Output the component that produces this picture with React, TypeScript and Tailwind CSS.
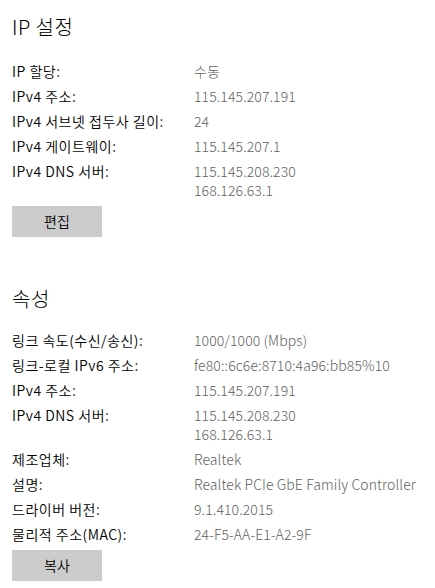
import React from "react";

type Row = { label: string; values: string[] };

const ipRows: Row[] = [
  { label: "IP 할당:", values: ["수동"] },
  { label: "IPv4 주소:", values: ["115.145.207.191"] },
  { label: "IPv4 서브넷 접두사 길이:", values: ["24"] },
  { label: "IPv4 게이트웨이:", values: ["115.145.207.1"] },
  { label: "IPv4 DNS 서버:", values: ["115.145.208.230", "168.126.63.1"] },
];

const propRows: Row[] = [
  { label: "링크 속도(수신/송신):", values: ["1000/1000 (Mbps)"] },
  { label: "링크-로컬 IPv6 주소:", values: ["fe80::6c6e:8710:4a96:bb85%10"] },
  { label: "IPv4 주소:", values: ["115.145.207.191"] },
  { label: "IPv4 DNS 서버:", values: ["115.145.208.230", "168.126.63.1"] },
  { label: "제조업체:", values: ["Realtek"] },
  { label: "설명:", values: ["Realtek PCIe GbE Family Controller"] },
  { label: "드라이버 버전:", values: ["9.1.410.2015"] },
  { label: "물리적 주소(MAC):", values: ["24-F5-AA-E1-A2-9F"] },
];

function Rows({ rows }: { rows: Row[] }) {
  return (
    <div className="flex flex-col">
      {rows.map((r, i) => (
        <div key={i} className="flex py-[3px] text-[14px] leading-[19px]">
          <div className="w-[182px] text-black font-[350] tracking-[0.5px]">{r.label}</div>
          <div className="flex flex-col text-[#5f5f5f] font-light tracking-[0.1px]">
            {r.values.map((v, j) => (
              <div key={j}>{v}</div>
            ))}
          </div>
        </div>
      ))}
    </div>
  );
}

export default function App() {
  return (
    <div
      className="w-[435px] h-[588px] bg-white px-3 overflow-hidden"
      style={{ fontFamily: '"Noto Sans CJK KR", "Noto Sans", sans-serif' }}
    >
      <div className="pt-[13px] text-[20px] leading-[28px] text-black font-light tracking-[0.5px]">IP 설정</div>
      <div className="mt-[18px]">
        <Rows rows={ipRows} />
      </div>
      <button className="mt-[3px] w-[90px] h-[31px] bg-[#cccccc] text-[14px] font-[350] text-black flex items-center justify-center">
        편집
      </button>
      <div className="mt-[48px] text-[20px] leading-[28px] text-black font-light tracking-[0.5px]">속성</div>
      <div className="mt-[15px]">
        <Rows rows={propRows} />
      </div>
      <button className="mt-[3px] w-[90px] h-[31px] bg-[#cccccc] text-[14px] font-[350] text-black flex items-center justify-center">
        복사
      </button>
    </div>
  );
}
